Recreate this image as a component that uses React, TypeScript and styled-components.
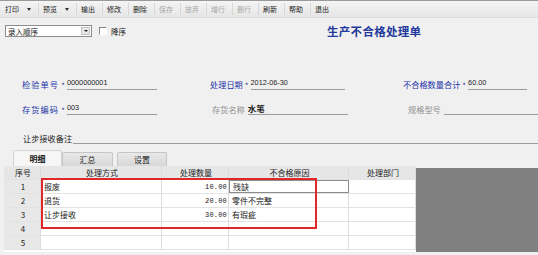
import React from 'react';
import styled, { createGlobalStyle } from 'styled-components';

const GlobalStyle = createGlobalStyle`
  html, body {
    margin: 0;
    padding: 0;
    background: #f0f0f0;
  }
  body {
    width: 538px;
    height: 255px;
    overflow: hidden;
    font-family: "Noto Sans CJK SC", "Liberation Sans", sans-serif;
    color: #111;
  }
`

const Page = styled.div`
  width: 538px;
  height: 255px;
  display: flex;
  flex-direction: column;
`

const Toolbar = styled.div`
  height: 16px;
  display: flex;
  align-items: center;
  padding-left: 1px;
  border-top: 1px solid #9a9a9a;
  border-bottom: 1px solid #dcdcdc;
  background: linear-gradient(#f4f4f4, #e6e6e6);
`

const ToolItem = styled.div<{ $off?: boolean }>`
  display: flex;
  align-items: center;
  gap: 4px;
  padding: 0 7px 0 4px;
  height: 12px;
  font-size: 7px;
  line-height: 12px;
  color: ${p => (p.$off ? '#a8a8a8' : '#222')};
  border-right: 1px solid #d8d8d8;
  &:last-child {
    border-right: none;
  }
`

const Caret = styled.span`
  width: 0;
  height: 0;
  margin-left: 4px;
  border-left: 2px solid transparent;
  border-right: 2px solid transparent;
  border-top: 3px solid #333;
`

const SubBar = styled.div`
  height: 12px;
  margin-top: 7px;
  padding-left: 5px;
  display: flex;
  align-items: center;
`

const Select = styled.div`
  width: 83px;
  height: 10px;
  display: flex;
  align-items: center;
  justify-content: space-between;
  border: 1px solid #8c8c8c;
  background: #fff;
  font-size: 7.5px;
  padding-left: 2px;
`

const SelectBtn = styled.span`
  width: 9px;
  height: 8px;
  margin-right: 1px;
  display: flex;
  align-items: center;
  justify-content: center;
  background: #e8e8e8;
  border: 1px solid #c4c4c4;
  box-sizing: border-box;
  &::after {
    content: '';
    border-left: 2px solid transparent;
    border-right: 2px solid transparent;
    border-top: 2px solid #222;
  }
`

const Check = styled.span`
  width: 6px;
  height: 6px;
  margin-left: 7px;
  border-left: 1px solid #888;
  border-top: 1px solid #888;
  border-right: 1px solid #fff;
  border-bottom: 1px solid #fff;
  background: #fff;
`

const CheckText = styled.span`
  font-size: 7.5px;
  margin-left: 4px;
`

const Title = styled.div`
  margin-left: 201px;
  font-size: 11.5px;
  font-weight: bold;
  color: #1f3a9c;
  letter-spacing: 0.3px;
`

const FormRow = styled.div<{ $top: number }>`
  margin-top: ${p => p.$top}px;
  height: 12px;
  padding-left: 22px;
  display: grid;
  grid-template-columns: 188px 193px 1fr;
`

const Field = styled.div<{ $end: number }>`
  display: flex;
  align-items: flex-end;
  margin-right: ${p => p.$end}px;
  height: 12px;
`

const Label = styled.span<{ $tone: 'blue' | 'grey'; $spread?: boolean; $pad?: number }>`
  font-size: 8.2px;
  line-height: 11px;
  white-space: nowrap;
  padding-left: ${p => p.$pad || 0}px;
  letter-spacing: ${p => (p.$spread ? '1.1px' : '0')};
  color: ${p => (p.$tone === 'blue' ? '#2230a8' : '#8e8e8e')};
`

const Star = styled.span`
  font-size: 8px;
  line-height: 9px;
  color: #3a3a8a;
  margin: 0 2px 0 2px;
`

const Value = styled.div<{ $gap?: number }>`
  flex: 1;
  height: 11px;
  margin-left: ${p => p.$gap || 0}px;
  border-bottom: 1px solid #9c9c9c;
  font-family: "Liberation Sans", "Noto Sans CJK SC", sans-serif;
  font-size: 7.3px;
  line-height: 10px;
  color: #222;
  white-space: nowrap;
`

const CnValue = styled(Value)`
  font-family: "Noto Sans CJK SC", sans-serif;
  font-size: 8.5px;
  font-weight: bold;
`

const Remark = styled.div`
  margin-top: 17px;
  height: 12px;
  padding-left: 23px;
  display: flex;
  align-items: flex-end;
`

const RemarkLabel = styled.span`
  font-size: 8.2px;
  line-height: 11px;
  color: #222;
`

const Tabs = styled.div`
  margin-top: 5px;
  height: 17px;
  padding-left: 13px;
  display: flex;
  align-items: flex-end;
`

const Tab = styled.div<{ $active?: boolean; $w: number; $gap?: number }>`
  width: ${p => p.$w}px;
  margin-left: ${p => p.$gap || 0}px;
  height: ${p => (p.$active ? 16 : 14)}px;
  box-sizing: border-box;
  display: flex;
  align-items: center;
  justify-content: center;
  padding-bottom: 1px;
  font-size: 8px;
  font-weight: ${p => (p.$active ? 'bold' : 'normal')};
  color: #222;
  border: 1px solid ${p => (p.$active ? '#d4d4d4' : '#c6c6c6')};
  border-bottom: none;
  border-radius: 2px 2px 0 0;
  background: ${p => (p.$active ? '#f6f6f6' : 'linear-gradient(#e8e8e8, #d8d8d8)')};
`

const GridArea = styled.div`
  position: relative;
  display: flex;
  padding-left: 4px;
`

const Table = styled.div`
  display: flex;
  flex-direction: column;
  background: #fff;
`

const Row = styled.div<{ $head?: boolean }>`
  height: 14px;
  display: grid;
  grid-template-columns: 37px 121px 67px 120px 67px;
  background: ${p => (p.$head ? '#e6e6e6' : '#fff')};
  border-bottom: 1px solid #e2e2e2;
  box-sizing: border-box;
  &:first-child {
    height: 14px;
  }
`

const Cell = styled.div<{ $align?: 'left' | 'right' | 'center'; $seq?: boolean; $focus?: boolean; $mono?: boolean }>`
  display: flex;
  align-items: center;
  justify-content: ${p => (p.$align === 'right' ? 'flex-end' : p.$align === 'center' ? 'center' : 'flex-start')};
  padding: 0 1px 0 3px;
  box-sizing: border-box;
  font-size: 8px;
  white-space: nowrap;
  overflow: hidden;
  font-family: ${p => (p.$mono ? '"Liberation Mono", monospace' : '"Noto Sans CJK SC", sans-serif')};
  ${p => (p.$mono ? 'font-size: 7px; letter-spacing: 0.2px;' : '')}
  color: #222;
  background: ${p => (p.$seq ? '#e8e8e8' : 'transparent')};
  border-right: 1px solid #dcdcdc;
  border: ${p => (p.$focus ? '1px solid #8c8c8c' : undefined)};
`

const Shade = styled.div`
  flex: 1;
  margin-top: 2px;
  height: 84px;
  background: #808080;
`

const Mark = styled.div`
  position: absolute;
  left: 41px;
  top: 12px;
  width: 276px;
  height: 51px;
  box-sizing: border-box;
  border: 2px solid #e0282b;
  pointer-events: none;
`

const tools = [
  { t: '打印', caret: true },
  { t: '预览', caret: true },
  { t: '输出' },
  { t: '修改' },
  { t: '删除' },
  { t: '保存', off: true },
  { t: '放弃', off: true },
  { t: '增行', off: true },
  { t: '删行', off: true },
  { t: '刷新' },
  { t: '帮助' },
  { t: '退出' },
];

const rows = [
  { way: '报废', qty: '10.00', why: '残缺' },
  { way: '退货', qty: '20.00', why: '零件不完整' },
  { way: '让步接收', qty: '30.00', why: '有瑕疵' },
  { way: '', qty: '', why: '' },
  { way: '', qty: '', why: '' },
];

export default function App() {
  return (
    <Page>
      <GlobalStyle />
      <Toolbar>
        {tools.map(it => (
          <ToolItem key={it.t} $off={it.off}>
            {it.t}
            {it.caret && <Caret />}
          </ToolItem>
        ))}
      </Toolbar>

      <SubBar>
        <Select>
          录入顺序
          <SelectBtn />
        </Select>
        <Check />
        <CheckText>降序</CheckText>
        <Title>生产不合格处理单</Title>
      </SubBar>

      <FormRow $top={41}>
        <Field $end={53}>
          <Label $tone="blue" $spread>检验单号</Label>
          <Star>*</Star>
          <Value>0000000001</Value>
        </Field>
        <Field $end={58}>
          <Label $tone="blue">处理日期</Label>
          <Star>*</Star>
          <Value>2012-06-30</Value>
        </Field>
        <Field $end={11}>
          <Label $tone="blue">不合格数量合计</Label>
          <Star>*</Star>
          <Value>60.00</Value>
        </Field>
      </FormRow>

      <FormRow $top={13}>
        <Field $end={53}>
          <Label $tone="blue" $spread>存货编码</Label>
          <Star>*</Star>
          <Value>003</Value>
        </Field>
        <Field $end={55}>
          <Label $tone="grey" $pad={2}>存货名称</Label>
          <CnValue $gap={3}>水笔</CnValue>
        </Field>
        <Field $end={0}>
          <Label $tone="grey" $pad={5}>规格型号</Label>
          <Value $gap={3}></Value>
        </Field>
      </FormRow>

      <Remark>
        <RemarkLabel>让步接收备注</RemarkLabel>
        <Value $gap={1}></Value>
      </Remark>

      <Tabs>
        <Tab $active $w={49}>明细</Tab>
        <Tab $w={51}>汇总</Tab>
        <Tab $w={50} $gap={4}>设置</Tab>
      </Tabs>

      <GridArea>
        <Table>
          <Row $head>
            <Cell $align="center">序号</Cell>
            <Cell $align="center">处理方式</Cell>
            <Cell $align="center">处理数量</Cell>
            <Cell $align="center">不合格原因</Cell>
            <Cell $align="center">处理部门</Cell>
          </Row>
          {rows.map((r, i) => (
            <Row key={i}>
              <Cell $seq $align="center">{i + 1}</Cell>
              <Cell>{r.way}</Cell>
              <Cell $align="right" $mono>{r.qty}</Cell>
              <Cell $focus={i === 0}>{r.why}</Cell>
              <Cell />
            </Row>
          ))}
        </Table>
        <Shade />
        <Mark />
      </GridArea>
    </Page>
  );
}
